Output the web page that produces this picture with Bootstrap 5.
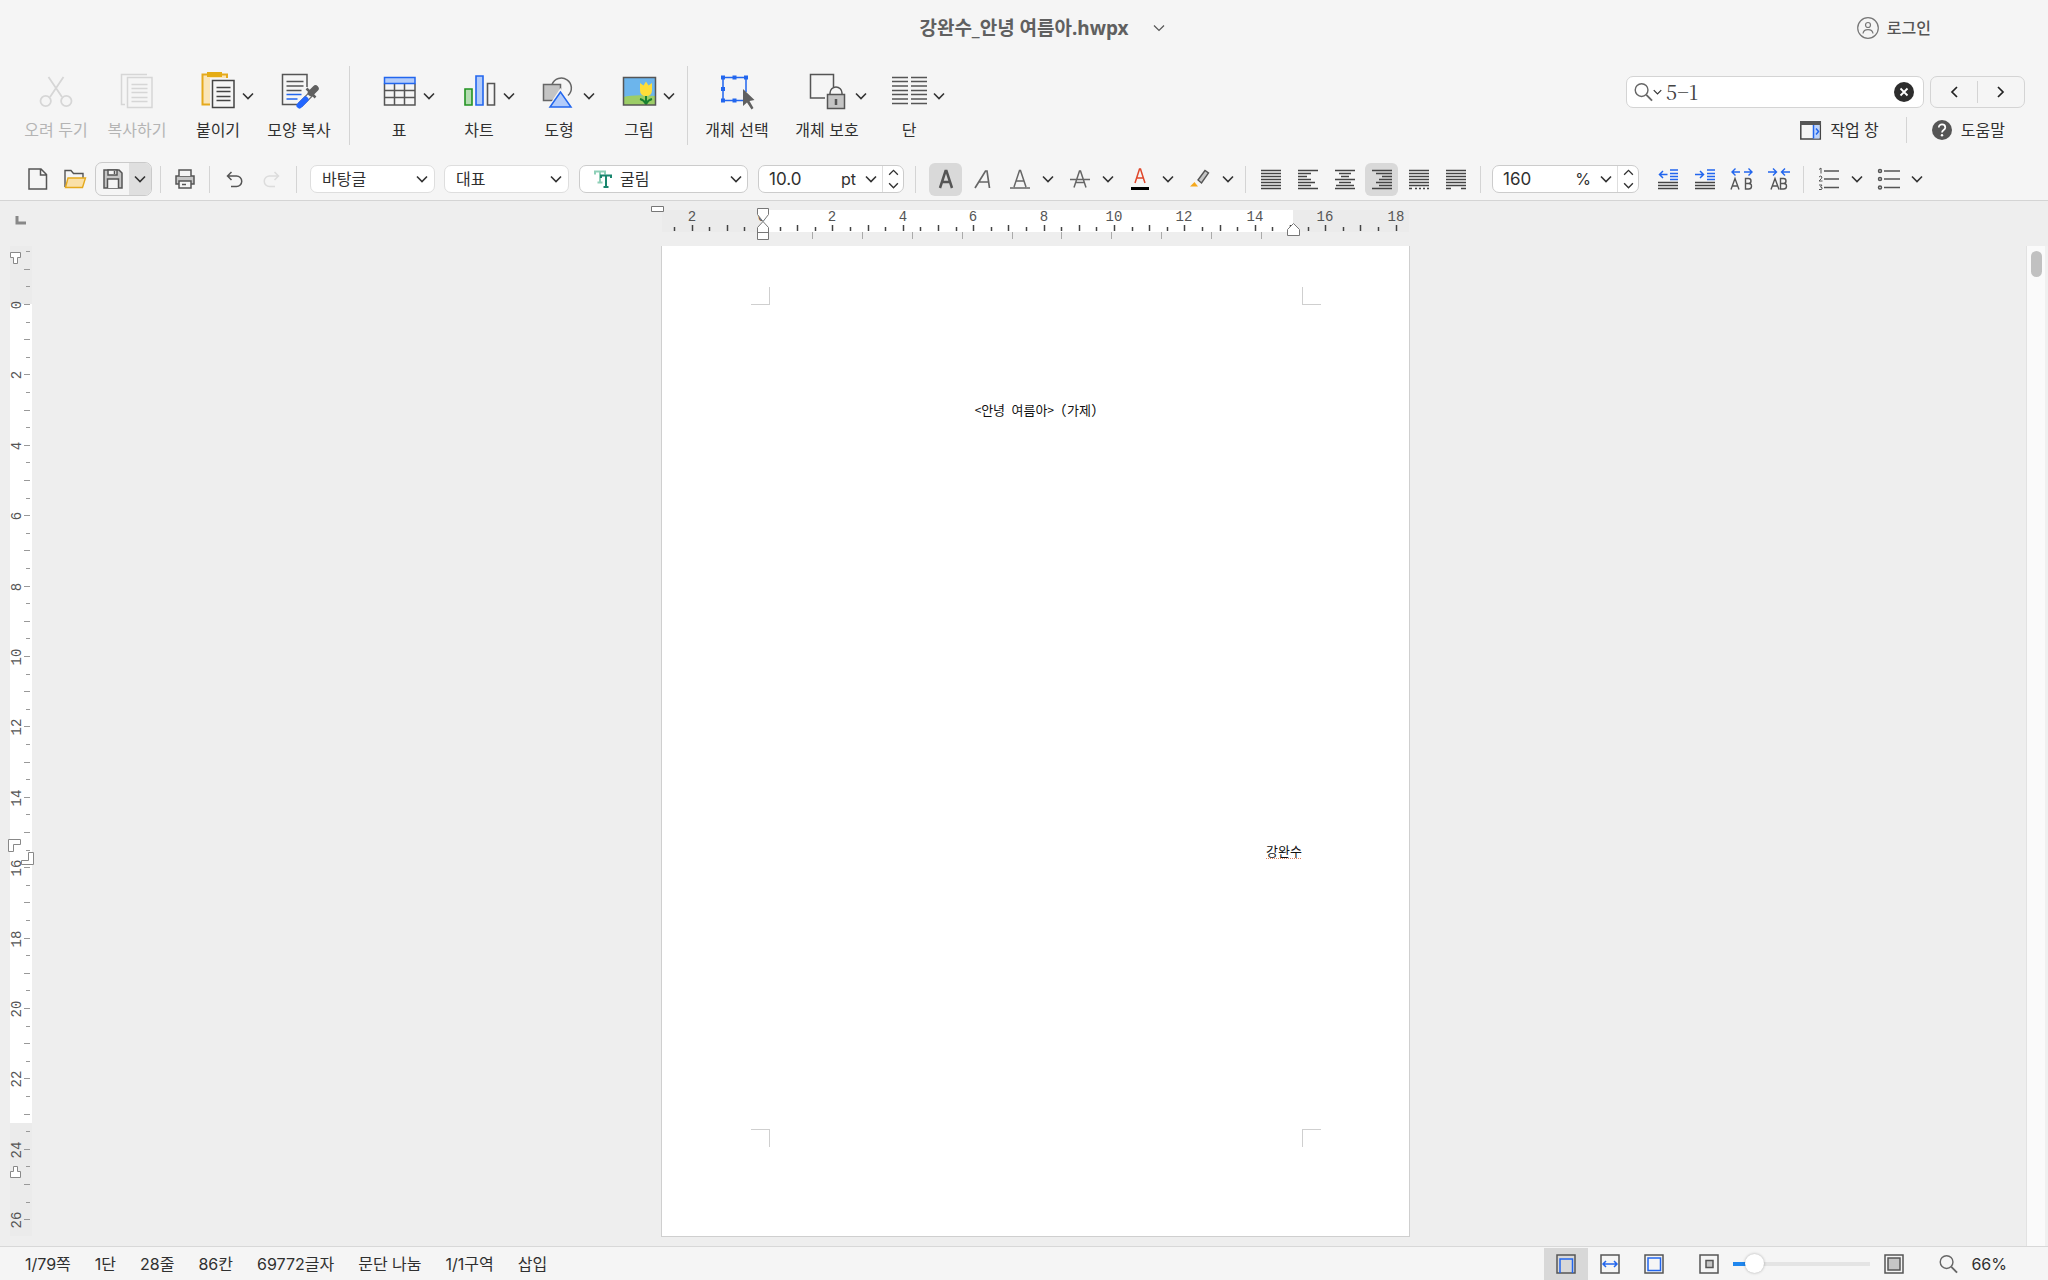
<!DOCTYPE html>
<html lang="ko">
<head>
<meta charset="utf-8">
<meta name="viewport" content="width=device-width, initial-scale=1">
<title>강완수_안녕 여름아.hwpx</title>
<link href="https://cdn.jsdelivr.net/npm/bootstrap@5.3.0/dist/css/bootstrap.min.css" rel="stylesheet">
<style>
:root{--ink:#303030;--panel:#f5f5f5;--desk:#eeeeee;--line:#d4d4d4;--blue:#2266ee}
body{font-family:"Inter","Noto Sans CJK KR",sans-serif;font-size:16px;line-height:20px;color:var(--ink);background:var(--panel)}
svg{display:block;overflow:visible;flex:none}
button{border:0;background:none;padding:0;color:inherit;display:flex;align-items:center;justify-content:center;white-space:nowrap}
button:disabled{color:#b4b4b4}
.title-row{display:grid;grid-template-columns:1fr auto 1fr;height:55px}
.doc-name{font-family:"Noto Sans","Noto Sans CJK KR",sans-serif;font-size:19px;line-height:24px;font-weight:700;color:#606060;margin:0}
.login{gap:8px;margin-right:117px;color:#555;font-weight:500}
.ribbon{height:103px;padding:11px 0 0 16px}
.tool{flex-direction:column;width:80px;gap:12px;padding-top:6px}
.split{display:flex;width:80px;padding-left:18px}
.split .tool{width:44px}
.split.wide{width:88px;padding-left:20px}
.split.wide .tool{width:52px}
.split .more{width:16px;height:60px}
.v-line{width:1px;background:var(--line);flex:none}
.ribbon .v-line{height:79px;margin:0 9px 0 10px}
.finder{width:399px;margin:10px 23px 0 auto}
.search{width:298px;height:32px;background:#fff;border:1px solid var(--line);border-radius:7px;padding:0 9px 0 7px}
.search input{border:0;outline:0;flex:1;min-width:0;font-family:"Noto Serif CJK KR","Liberation Serif","Noto Sans CJK KR",serif;font-size:20px;line-height:24px;color:#444;padding:0}
.prev-next{width:95px;height:32px;border:1px solid var(--line);border-radius:7px}
.prev-next button{flex:1}
.links{height:28px;padding-right:20px}
.links button{gap:9px}
.ribbon .links .v-line{height:26px;margin:0 25px 0 27px}
.ribbon .prev-next .v-line{height:22px;margin:0}
.fmt{height:43px;border-bottom:1px solid var(--line);padding-left:21px}
.fmt .v-line{height:27px}
.tb{width:33px;height:33px;border-radius:6px}
.tb.on{background:#d9d9d9}
.chev{width:20px;height:33px;margin-left:2px;margin-right:1px}
.pair{display:flex}
.save{width:57px;height:34px;border:1px solid #cacaca;border-radius:7px;overflow:hidden;display:flex}
.save button:last-child{background:#dfdfdf;width:22px}
.save button:first-child{flex:1}
.box{background-color:#fff;border:1px solid #ccc;border-radius:7px;height:28px;overflow:hidden}
.form-select.pick{height:28px;border:1px solid #dedede;border-radius:7px;padding:0 24px 0 11px;font-size:16px;line-height:20px;color:var(--ink);background-color:#fff;background-size:12px 8px;background-position:right 6px center;background-image:url("data:image/svg+xml,%3Csvg xmlns='http://www.w3.org/2000/svg' viewBox='0 0 12 8'%3E%3Cpath d='M1 1.5l5 5 5-5' fill='none' stroke='%23333' stroke-width='1.6'/%3E%3C/svg%3E")}
.pick.w-style{width:125px}
.box input{border:0;width:66px;padding:0 0 0 10px;font-size:17px;color:var(--ink);background:none}
.box .form-select.pick{width:auto;border:0;border-radius:0;background-color:transparent;height:26px;padding:0 26px 0 0;background-position:right 5px center;text-align:right}
.box .form-select.pick.face{padding-left:8px;text-align:left}
.spin{width:21px;border-left:1px solid #dedede}
.spin button{flex:1}
.desk{background:var(--desk);min-height:0}
.left-rule{width:45px;flex:none}
.rule-row{height:45px;flex:none}
.rule text{font-family:"Liberation Mono",monospace;font-size:14px;fill:#555;text-anchor:middle}
.paper{width:749px;background:#fff;border:1px solid #cfcfcf;border-top:0;padding:41px 88px 89px 89px;margin-bottom:9px}
.mark-tl,.mark-tr,.mark-bl,.mark-br{width:19px;height:18px;border:0 solid #cfcfcf}
.mark-tl{border-width:0 1px 1px 0}.mark-tr{border-width:0 0 1px 1px}
.mark-bl{border-width:1px 1px 0 0}.mark-br{border-width:1px 0 0 1px}
.sheet{padding:95px 19px 0;font-family:"Noto Sans Mono CJK KR","Noto Sans CJK KR",sans-serif;font-size:13px;line-height:20px;color:#111}
.sheet p{margin:0}
.author{padding-top:421px;text-align:right}
.spell{text-decoration:underline dotted #e0825f 1px;text-underline-offset:2px}
.scroll{width:22px;background:#fafafa;border-left:1px solid #e2e2e2;border-right:3px solid #f0f0f0;margin-top:45px;padding:5px 4px}
.thumb{width:11px;height:26px;border-radius:6px;background:#c1c1c1}
.status{height:34px;border-top:1px solid #d8d8d8;padding:0 41px 0 25px}
.facts{gap:24px}
.view{width:44px;height:32px}
.view.on{background:#d8d8d8}
.zoom-range{appearance:none;-webkit-appearance:none;width:137px;height:20px;background:linear-gradient(to right,#1f86ee 14px,#e4e4e4 14px) center/100% 4px no-repeat;margin:0 14px}
.zoom-range::-webkit-slider-thumb{-webkit-appearance:none;width:19px;height:19px;border-radius:50%;background:#fff;box-shadow:0 0 3px rgba(0,0,0,.3)}
</style>
<script src="https://cdn.jsdelivr.net/npm/bootstrap@5.3.0/dist/js/bootstrap.bundle.min.js"></script>
</head>
<body class="vh-100 d-flex flex-column overflow-hidden">
<svg width="0" height="0" class="position-absolute" aria-hidden="true">
  <defs>
    <symbol id="down" viewBox="0 0 12 8"><path d="M1 1.5l5 5 5-5" fill="none" stroke="#333" stroke-width="1.6"/></symbol>
    <symbol id="up" viewBox="0 0 12 8"><path d="M1 6.5l5-5 5 5" fill="none" stroke="#333" stroke-width="1.5"/></symbol>
    <symbol id="lens" viewBox="0 0 20 20"><g fill="none" stroke="#666"><circle cx="8" cy="8" r="6.7" stroke-width="1.5"/><path d="M13 13l6 6" stroke-width="2"/></g></symbol>
  </defs>
</svg>

<header>
  <div class="title-row align-items-center">
    <span></span>
    <h1 class="doc-name">강완수_안녕 여름아.hwpx</h1>
    <div class="d-flex align-items-center justify-content-between">
      <button class="ms-4" aria-label="문서 메뉴"><svg width="12" height="8" viewBox="0 0 12 8"><path d="M1 1.5l5 5 5-5" fill="none" stroke="#555" stroke-width="1.2"/></svg></button>
      <button class="login"><svg width="22" height="22" viewBox="0 0 22 22" fill="none" stroke="#777" stroke-width="1.2"><circle cx="11" cy="11" r="10.3"/><circle cx="11" cy="8" r="2.5"/><path d="M6 16.5c.7-5.2 9.3-5.2 10 0"/></svg>로그인</button>
    </div>
  </div>

  <div class="ribbon d-flex align-items-start">
    <div class="d-flex" style="gap:1px">
      <button class="tool" disabled><svg width="36" height="36" viewBox="0 0 36 36" fill="none" stroke="#d6d6d6" stroke-width="1.8"><circle cx="7.7" cy="29" r="5.2"/><circle cx="28.3" cy="29" r="5.2"/><path d="M10.5 5l13.5 20M25.5 5L12 25"/></svg>오려 두기</button>
      <button class="tool" disabled><svg width="36" height="36" viewBox="0 0 36 36" fill="none" stroke="#d6d6d6" stroke-width="1.5"><path d="M28 2.5H2.5v30H6M8.5 5.5H33v30H8.5zM12.5 12.5h16M12.5 16.5h16M12.5 20.5h16M12.5 25.5h16M12.5 29.5h16"/></svg>복사하기</button>
      <div class="split"><button class="tool"><svg width="36" height="36" viewBox="0 0 36 36" fill="none"><path d="M2.5 2.5H27v30H2.5z" fill="#fae5b8" stroke="#e5a91c" stroke-width="2"/><path d="M7 0h15v5H7z" fill="#e5ac14"/><path d="M10 6h26v30H10z" fill="#f5f5f5"/><path d="M12.5 8.5H34v27H12.5zM16.5 15.5h14M16.5 19.5h14M16.5 24.5h14M16.5 28.5h14" stroke="#444" stroke-width="1.5"/></svg>붙이기</button><button class="more" aria-label="붙이기 옵션"><svg width="12" height="8"><use href="#down"/></svg></button></div>
      <button class="tool"><svg width="36" height="36" viewBox="0 0 36 36" fill="none"><path d="M17 32.5H1.5v-30H26V15M5.5 9.5h17M5.5 14h17M5.5 18.5h15" stroke="#555" stroke-width="1.5"/><path d="M5.5 22.5h15M5.5 27h11" stroke="#26e" stroke-width="1.5"/><path d="M19 33l11-11" stroke="#666" stroke-width="6"/><path d="M21 31l8-8" stroke="#f5f5f5" stroke-width="3.5"/><path d="M18.5 33.5l6-6" stroke="#26f" stroke-width="6" stroke-linecap="round"/><path d="M25.5 16.5l9 9M28 22l6-5" stroke="#606060" stroke-width="2.5"/><path d="M30 21l4.5-4.5" stroke="#606060" stroke-width="6.5" stroke-linecap="round"/></svg>모양 복사</button>
    </div>
    <div class="v-line"></div>
    <div class="split"><button class="tool"><svg width="36" height="36" viewBox="0 0 36 36" fill="none"><path d="M3.5 11.5V33H34V11.5M3.5 18.5H34M3.5 25.5H34M13.5 12v21M23.5 12v21" stroke="#555" stroke-width="1.5"/><path d="M3.5 5.5H34v6H3.5z" fill="#b3ccfa" stroke="#26e" stroke-width="1.5"/></svg>표</button><button class="more" aria-label="표 옵션"><svg width="12" height="8"><use href="#down"/></svg></button></div>
    <div class="split"><button class="tool"><svg width="36" height="36" viewBox="0 0 36 36" stroke-width="1.6"><path d="M4 17h7v16H4z" fill="#b4dcb1" stroke="#229322"/><path d="M15 4h7v29h-7z" fill="#b3ccfa" stroke="#26e"/><path d="M26.5 11.5h7V33h-7z" fill="none" stroke="#555"/></svg>차트</button><button class="more" aria-label="차트 옵션"><svg width="12" height="8"><use href="#down"/></svg></button></div>
    <div class="split"><button class="tool"><svg width="36" height="36" viewBox="0 0 36 36" stroke="#666" stroke-width="1.5"><path d="M11 12.5a10 10 0 1 1 16 11" fill="none"/><path d="M2.5 12.5h17v16h-17z" fill="#c4c4c4"/><path d="M19.5 16L6 36.5h27z" fill="#f5f5f5" stroke="none"/><path d="M19.5 20L9 35h21z" fill="#b3ccfa" stroke="#26e"/></svg>도형</button><button class="more" aria-label="도형 옵션"><svg width="12" height="8"><use href="#down"/></svg></button></div>
    <div class="split"><button class="tool"><svg width="36" height="36" viewBox="0 0 36 36"><path d="M2.5 5.5h32V33h-32z" fill="#6cb5ec"/><path d="M2.5 25q10-3 32-1v9h-32z" fill="#9ccd67"/><path d="M19 11l3.5 2.5 2.5-4 2.5 4L31 11v7q0 6-6 6t-6-6z" fill="#ffde38"/><path d="M25 24v9M25 32q-2-4-6-5M25 32q2-4 6-5" fill="none" stroke="#198030" stroke-width="2"/><path d="M2.5 5.5h32V33h-32z" fill="none" stroke="#555" stroke-width="1.5"/></svg>그림</button><button class="more" aria-label="그림 옵션"><svg width="12" height="8"><use href="#down"/></svg></button></div>
    <div class="v-line ms-2"></div>
    <button class="tool"><svg width="36" height="36" viewBox="0 0 36 36"><path d="M27 20V5.5H4V28.5h20" fill="none" stroke="#26e" stroke-width="1.5"/><path d="M2 3.5h4v4H2zM13.5 3.5h4v4h-4zM25 3.5h4v4h-4zM2 15h4v4H2zM2 26.5h4v4H2zM13.5 26.5h4v4h-4z" fill="#26e"/><path d="M24 17v17l4-3.5 4.5 7 2-1.5-4-7 5-1z" fill="#606060"/></svg>개체 선택</button>
    <div class="split wide ms-1"><button class="tool"><svg width="36" height="36" viewBox="0 0 36 36" fill="none" stroke="#555" stroke-width="1.5"><path d="M16 26H1.5V2.5h23V15"/><path d="M21 22v-1a6 6 0 0 1 12 0v1"/><path d="M18.5 22.5h17v14h-17z" fill="#c4c4c4"/><path d="M27 27v6" stroke-width="2.5"/></svg>개체 보호</button><button class="more" aria-label="개체 보호 옵션"><svg width="12" height="8"><use href="#down"/></svg></button></div>
    <div class="split"><button class="tool"><svg width="36" height="36" viewBox="0 0 36 36" stroke="#555" stroke-width="1.5"><path d="M1 5.5h16M1 9.5h16M1 14h16M1 18.5h16M1 22.5h16M1 27h16M1 31.5h16M20 5.5h16M20 9.5h16M20 14h16M20 18.5h16M20 22.5h16M20 27h16M20 31.5h16"/></svg>단</button><button class="more" aria-label="단 옵션"><svg width="12" height="8"><use href="#down"/></svg></button></div>

    <div class="finder">
      <div class="d-flex justify-content-between">
        <div class="search d-flex align-items-center">
          <svg width="19" height="20"><use href="#lens"/></svg>
          <svg width="9" height="6" class="me-1"><use href="#down"/></svg>
          <input type="text" value="5−1" aria-label="찾을 내용">
          <button aria-label="지우기"><svg width="20" height="20" viewBox="0 0 20 20"><circle cx="10" cy="10" r="10" fill="#2d2d2d"/><path d="M6.5 6.5l7 7M13.5 6.5l-7 7" stroke="#fff" stroke-width="1.8"/></svg></button>
        </div>
        <div class="prev-next d-flex align-items-center">
          <button aria-label="이전"><svg width="8" height="12" viewBox="0 0 8 12"><path d="M7 1L2 6l5 5" fill="none" stroke="#222" stroke-width="1.7"/></svg></button>
          <span class="v-line"></span>
          <button aria-label="다음"><svg width="8" height="12" viewBox="0 0 8 12"><path d="M1 1l5 5-5 5" fill="none" stroke="#222" stroke-width="1.7"/></svg></button>
        </div>
      </div>
      <div class="links d-flex align-items-center justify-content-end mt-2">
        <button><svg width="21" height="19" viewBox="0 0 21 19"><path d="M.8 1h19.5v17H.8z" fill="#f5f5f5" stroke="#444" stroke-width="1.5"/><path d="M0 0h21v4H0z" fill="#555"/><path d="M13.5 4h6v13.5h-6z" fill="#bcd3fb"/><path d="M13.5 4v13.5M16 7.5l2.5 3-2.5 3" fill="none" stroke="#26e" stroke-width="1.5"/></svg>작업 창</button>
        <span class="v-line"></span>
        <button><svg width="20" height="20" viewBox="0 0 20 20"><circle cx="10" cy="10" r="10" fill="#555"/><path d="M6.8 7.5c0-4.2 6.5-4 6.5 0 0 2.5-3.3 2.5-3.3 5" fill="none" stroke="#fff" stroke-width="1.7"/><circle cx="10" cy="15.2" r="1.2" fill="#fff"/></svg>도움말</button>
      </div>
    </div>
  </div>

  <div class="fmt d-flex align-items-center">
    <button class="tb" aria-label="새 문서"><svg width="20" height="22" viewBox="0 0 20 22" fill="none" stroke="#555" stroke-width="1.5"><path d="M1 1h12l5.5 5.5V21H1zM12.5 1v6h6"/></svg></button>
    <button class="tb ms-1" aria-label="열기"><svg width="22" height="20" viewBox="0 0 22 20" stroke-width="1.4"><path d="M1 18V1.5h6l2.5 3H19V9" fill="none" stroke="#555"/><path d="M4 9h17.5L18.5 18.5H1.5z" fill="#fae0a8" stroke="#e5a91c"/></svg></button>
    <div class="save ms-1"><button aria-label="저장"><svg width="20" height="20" viewBox="0 0 20 20" fill="none" stroke="#555" stroke-width="1.5"><path d="M1 1h15l3 3v15H1z" fill="#c6c6c6"/><path d="M5 1h9v5H5zM4.5 19v-9h11v9" fill="#f5f5f5"/><path d="M11.5 2v3"/></svg></button><button aria-label="저장 옵션"><svg width="12" height="8"><use href="#down"/></svg></button></div>
    <span class="v-line ms-2 me-1"></span>
    <button class="tb" style="margin-left:3px" aria-label="인쇄"><svg width="20" height="20" viewBox="0 0 20 20" stroke="#555" stroke-width="1.5"><path d="M1 7h18v8H1z" fill="#c6c6c6"/><path d="M4 7V1h12v6M4 12h12v7H4z" fill="#f5f5f5"/><path d="M7 15.5h4"/></svg></button>
    <span class="v-line ms-2"></span>
    <button class="tb ms-2" aria-label="되돌리기"><svg width="17" height="17" viewBox="0 0 17 17" fill="none" stroke="#555" stroke-width="1.5"><path d="M5.5 1L1.5 5l4 4M1.5 5H10.5a5 5 0 0 1 0 10.5H5"/></svg></button>
    <button class="tb ms-1" aria-label="다시 실행" disabled><svg width="17" height="17" viewBox="0 0 17 17" fill="none" stroke="#dcdcdc" stroke-width="1.5"><path d="M11.5 1l4 4-4 4M15.5 5H6.5a5 5 0 0 0 0 10.5H12"/></svg></button>
    <span class="v-line" style="margin:0 13px 0 8px"></span>
    <select class="form-select pick w-style" aria-label="스타일"><option>바탕글</option></select>
    <select class="form-select pick w-style" style="margin-left:9px" aria-label="언어"><option>대표</option></select>
    <div class="box d-flex align-items-center" style="width:169px;margin-left:10px;padding-left:14px">
      <svg width="18" height="18" viewBox="0 0 18 18" fill="none"><path d="M1 4.5V1.5h10v3M6 1.5v11M3.5 12.5h5" stroke="#8fd0b8" stroke-width="2"/><path d="M7 8V5.5h10V8M12 5.5V17M9.5 17h5" stroke="#19866e" stroke-width="2"/></svg>
      <select class="form-select pick face flex-grow-1" aria-label="글꼴"><option>굴림</option></select>
    </div>
    <div class="box d-flex" style="width:146px;margin-left:10px">
      <input type="text" value="10.0" aria-label="글자 크기">
      <select class="form-select pick flex-grow-1" aria-label="단위"><option>pt</option></select>
      <div class="spin d-flex flex-column"><button aria-label="크게"><svg width="11" height="7"><use href="#up"/></svg></button><button aria-label="작게"><svg width="11" height="7"><use href="#down"/></svg></button></div>
    </div>
    <span class="v-line" style="margin:0 13px 0 11px"></span>
    <div class="d-flex gap-1">
      <button class="tb on" aria-label="진하게"><svg width="20" height="20" viewBox="0 0 20 20" fill="none" stroke="#555" stroke-width="2.5"><path d="M4 19l5.5-17h1L16 19M6 13h8"/></svg></button>
      <button class="tb" aria-label="기울임"><svg width="20" height="20" viewBox="0 0 20 20" fill="none" stroke="#666" stroke-width="1.7"><path d="M2 19L12.5 2H14l2.5 17M6 13h9.5"/></svg></button>
      <div class="pair"><button class="tb" aria-label="밑줄"><svg width="20" height="20" viewBox="0 0 20 20" fill="none" stroke="#666" stroke-width="1.5"><path d="M4 18L9.5 1.5h1L16 18M6 12h8M0 19h20"/></svg></button><button class="chev" aria-label="밑줄 옵션"><svg width="12" height="8"><use href="#down"/></svg></button></div>
      <div class="pair"><button class="tb" aria-label="취소선"><svg width="20" height="20" viewBox="0 0 20 20" fill="none" stroke="#666" stroke-width="1.5"><path d="M4 18.5L9.5 2h1L16 18.5M6 13.5h8M0 10.5h20"/></svg></button><button class="chev" aria-label="취소선 옵션"><svg width="12" height="8"><use href="#down"/></svg></button></div>
      <div class="pair"><button class="tb" aria-label="글자 색"><svg width="18" height="22" viewBox="0 0 18 22" fill="none"><path d="M4 15L8.5 1h1L14 15M5.5 10h7" stroke="#e0472b" stroke-width="1.5"/><path d="M0 20.5h18" stroke="#000" stroke-width="3"/></svg></button><button class="chev" aria-label="글자 색 옵션"><svg width="12" height="8"><use href="#down"/></svg></button></div>
      <div class="pair"><button class="tb" aria-label="형광펜"><svg width="20" height="20" viewBox="0 0 20 20"><path d="M8 11l7-9.5 3.5 2.5-7 10z" fill="#c6c6c6" stroke="#555" stroke-width="1.4"/><path d="M0 17.5L4.5 13l3.5 4.5z" fill="#f5a81c"/></svg></button><button class="chev" aria-label="형광펜 옵션"><svg width="12" height="8"><use href="#down"/></svg></button></div>
    </div>
    <span class="v-line" style="margin:0 8px 0 6px"></span>
    <div class="d-flex gap-1" id="aligns"></div>
    <span class="v-line" style="margin:0 11px 0 8px"></span>
    <div class="box d-flex" style="width:147px">
      <input type="text" value="160" aria-label="줄 간격">
      <select class="form-select pick flex-grow-1" aria-label="줄 간격 단위"><option>%</option></select>
      <div class="spin d-flex flex-column"><button aria-label="늘리기"><svg width="11" height="7"><use href="#up"/></svg></button><button aria-label="줄이기"><svg width="11" height="7"><use href="#down"/></svg></button></div>
    </div>
    <div class="d-flex gap-1" style="margin-left:12px">
      <button class="tb" aria-label="왼쪽 여백 줄이기"><svg width="20" height="20" viewBox="0 0 20 20" fill="none" stroke-width="1.5"><path d="M12 1h8M12 4.5h8M12 7.5h8M12 10.5h8M9.5 5.5h-8M5 2L1.5 5.5 5 9" stroke="#26e"/><path d="M0 13.5h20M0 16.5h20M0 19.5h20" stroke="#444"/></svg></button>
      <button class="tb" aria-label="왼쪽 여백 늘리기"><svg width="20" height="20" viewBox="0 0 20 20" fill="none" stroke-width="1.5"><path d="M12 1h8M12 4.5h8M12 7.5h8M12 10.5h8M0 5.5h8M5 2l3.5 3.5L5 9" stroke="#26e"/><path d="M0 13.5h20M0 16.5h20M0 19.5h20" stroke="#444"/></svg></button>
      <button class="tb" aria-label="자간 넓게"><svg width="22" height="22" viewBox="0 0 22 22" fill="none" stroke="#555" stroke-width="1.4"><path d="M9 4H1M4.5.5L1 4l3.5 3.5M13 4h8M17.5.5L21 4l-3.5 3.5" stroke="#26e"/><path d="M0 21.5L4 10.5 8 21.5M1.5 18h5M14.5 10.5v10.5h3q3 0 3-2.8t-3-2.7h-3 3q2.5 0 2.5-2.5t-2.5-2.5z"/></svg></button>
      <button class="tb" aria-label="자간 좁게"><svg width="22" height="22" viewBox="0 0 22 22" fill="none" stroke="#555" stroke-width="1.4"><path d="M0 4h8M5 .5L8.5 4 5 7.5M22 4h-8M17 .5L13.5 4 17 7.5" stroke="#26e"/><path d="M3 21.5L7 10.5l4 11M4.5 18h5M12.5 10.5v10.5h3q3 0 3-2.8t-3-2.7h-3 3q2.5 0 2.5-2.5t-2.5-2.5z"/></svg></button>
    </div>
    <span class="v-line mx-2"></span>
    <div class="pair"><button class="tb" aria-label="번호 매기기"><svg width="20" height="22" viewBox="0 0 20 22" fill="none" stroke="#555" stroke-width="1.5"><path d="M5 3h15M5 11h15M5 19.5h15"/><path d="M0 1.5L2 0v5.5M0 9q2-2 3 0 0 1.5-3 4h3.5M0 17h3l-1.5 2q3 .5 1 2.5H0" stroke-width="1"/></svg></button><button class="chev" aria-label="번호 옵션"><svg width="12" height="8"><use href="#down"/></svg></button></div>
    <div class="pair ms-1"><button class="tb" aria-label="글머리표"><svg width="22" height="22" viewBox="0 0 22 22" fill="none" stroke="#555" stroke-width="1.5"><path d="M6 3h16M6 11h16M6 19.5h16"/><circle cx="2" cy="3" r="1.5"/><circle cx="2" cy="11" r="1.5"/><circle cx="2" cy="19.5" r="1.5"/></svg></button><button class="chev" aria-label="글머리표 옵션"><svg width="12" height="8"><use href="#down"/></svg></button></div>
  </div>
</header>

<main class="desk d-flex flex-grow-1">
  <aside class="left-rule">
    <svg class="rule" id="vrule" width="45" height="1045" viewBox="0 0 45 1045">
      <rect x="10" y="45" width="22" height="58" fill="#ebebeb"/><rect x="10" y="103" width="22" height="819" fill="#fff"/><rect x="10" y="922" width="22" height="113" fill="#ebebeb"/>
      <g class="ticks"></g>
      <path d="M17 15v7h9" fill="none" stroke="#888" stroke-width="3"/>
      <g fill="#fff" stroke="#888"><path d="M10.5 51.5h10v5h-3v6h-4v-6h-3z"/><path d="M8.5 638.5h12v5h-7v7h-5z"/><path d="M33.5 651.5v12h-12v-4h7v-8z"/><path d="M13.5 965.5h4v5h3v6h-10v-6h3z"/></g>
    </svg>
  </aside>
  <section class="flex-grow-1 d-flex flex-column align-items-center">
    <div class="rule-row">
      <svg class="rule" id="hrule" width="799" height="45" viewBox="0 0 799 45">
        <rect x="26" y="9" width="101" height="22" fill="#ebebeb"/><rect x="127" y="9" width="530" height="22" fill="#fff"/><rect x="657" y="9" width="116" height="22" fill="#ebebeb"/>
        <g class="ticks"></g>
        <g fill="#fff" stroke="#777"><path d="M15.5 5.5h12v5h-12z"/><path d="M121.5 7.5h11v6l-5.5 7-5.5-7z"/><path d="M127 20.5l5.5 6v12h-11v-12zM121.5 31.5h11"/><path d="M657.5 22.5l6 6v6h-12v-6z"/></g>
      </svg>
    </div>
    <article class="paper flex-grow-1 d-flex flex-column">
      <div class="d-flex justify-content-between"><span class="mark-tl"></span><span class="mark-tr"></span></div>
      <div class="sheet flex-grow-1">
        <p class="text-center">&lt;안녕 여름아&gt; (가제)</p>
        <p class="author"><span class="spell">강완수</span></p>
      </div>
      <div class="d-flex justify-content-between"><span class="mark-bl"></span><span class="mark-br"></span></div>
    </article>
  </section>
  <div class="scroll"><div class="thumb"></div></div>
</main>

<footer class="status d-flex align-items-center justify-content-between">
  <div class="facts d-flex"><span>1/79쪽</span><span>1단</span><span>28줄</span><span>86칸</span><span>69772글자</span><span>문단 나눔</span><span>1/1구역</span><span>삽입</span></div>
  <div class="d-flex align-items-center">
    <button class="view on" aria-label="쪽 윤곽"><svg width="20" height="20" viewBox="0 0 20 20" fill="none" stroke="#555" stroke-width="1.5"><path d="M1 1h18v18H1z"/><path d="M4 19V5h12.5v14" stroke="#26e"/></svg></button>
    <button class="view" aria-label="폭 맞춤"><svg width="20" height="20" viewBox="0 0 20 20" fill="none" stroke="#555" stroke-width="1.5"><path d="M1 1h18v18H1z"/><path d="M3 10h14M6 7l-3 3 3 3M14 7l3 3-3 3" stroke="#26e"/></svg></button>
    <button class="view" aria-label="쪽 맞춤"><svg width="20" height="20" viewBox="0 0 20 20" fill="none" stroke="#555" stroke-width="1.5"><path d="M1 1h18v18H1z"/><path d="M4 4h12.5v12.5H4z" stroke="#26e"/></svg></button>
    <button style="margin-left:23px" aria-label="축소"><svg width="20" height="20" viewBox="0 0 20 20" fill="none" stroke="#555" stroke-width="1.5"><path d="M1 1h18v18H1z"/><path d="M7 6.5h7v7H7z" fill="#c6c6c6"/></svg></button>
    <input class="zoom-range" type="range" min="10" max="500" value="60" aria-label="확대 비율">
    <button aria-label="확대"><svg width="20" height="20" viewBox="0 0 20 20" fill="none" stroke="#555" stroke-width="1.5"><path d="M1 1h18v18H1z"/><path d="M4 4h12v12H4z" fill="#c6c6c6"/></svg></button>
    <button style="margin-left:35px;gap:13px"><svg width="19" height="20"><use href="#lens"/></svg>66%</button>
  </div>
</footer>
<script>
// Paragraph alignment icons: seven rows, each [start, end]
const full = [0, 20];
const aligns = {
  '양쪽 정렬': Array(7).fill(full),
  '왼쪽 정렬': [full, [0, 13], [0, 9], [0, 13], [0, 17], [0, 13], full],
  '가운데 정렬': [full, [4, 16], [6, 14], full, [4, 16], [1, 19], full],
  '오른쪽 정렬': [full, [4, 20], [10, 20], [7, 20], [4, 20], [7, 20], full],
  '배분 정렬': Array(7).fill(full),
  '나눔 정렬': Array(7).fill(full)
};
document.getElementById('aligns').innerHTML = Object.entries(aligns).map(([name, rows]) => {
  let d = rows.map(([a, b], i) => {
    const y = i * 3 + 1.5;
    if (i === 6 && name === '배분 정렬') return `M0 ${y}h3M6 ${y}h2M10 ${y}h2M14 ${y}h2M18 ${y}h2`;
    if (i === 6 && name === '나눔 정렬') return `M0 ${y}h5M15 ${y}h5`;
    return `M${a} ${y}H${b}`;
  }).join('');
  return `<button class="tb${name === '오른쪽 정렬' ? ' on' : ''}" aria-label="${name}"><svg width="20" height="21" viewBox="0 0 20 21" stroke="#444" stroke-width="1.5"><path d="${d}"/></svg></button>`;
}).join('');

// Ruler scale: 35.2px per centimetre, a tick every half centimetre
const CM = 35.2;
function ticks(first, last, draw) {
  let out = '';
  for (let i = first; i <= last; i++) out += draw(Math.round(i * CM / 2), i);
  return out;
}
let h = ticks(-5, 36, (p, i) => {
  const x = 126 + p, top = i % 2 ? 26 : 24;
  return `<path d="M${x}.5 ${top}V30" stroke="#444" stroke-width="1.5"/>` +
    (i % 4 ? '' : `<text x="${x}" y="20">${Math.abs(i / 2)}</text>`);
});
for (let k = 1; k <= 10; k++) h += `<path d="M${Math.round(126 + k * 49.9)}.5 31v7" stroke="#aaa"/>`;
document.querySelector('#hrule .ticks').innerHTML = h;
document.querySelector('#vrule .ticks').innerHTML = ticks(-3, 52, (p, i) => {
  const y = 103 + p;
  return `<path d="M${i % 2 ? 26 : 24} ${y}.5H30" stroke="#999"/>` +
    (i % 4 ? '' : `<text transform="translate(21 ${y + 1}) rotate(-90)">${i / 2}</text>`);
});
</script>
</body>
</html>
